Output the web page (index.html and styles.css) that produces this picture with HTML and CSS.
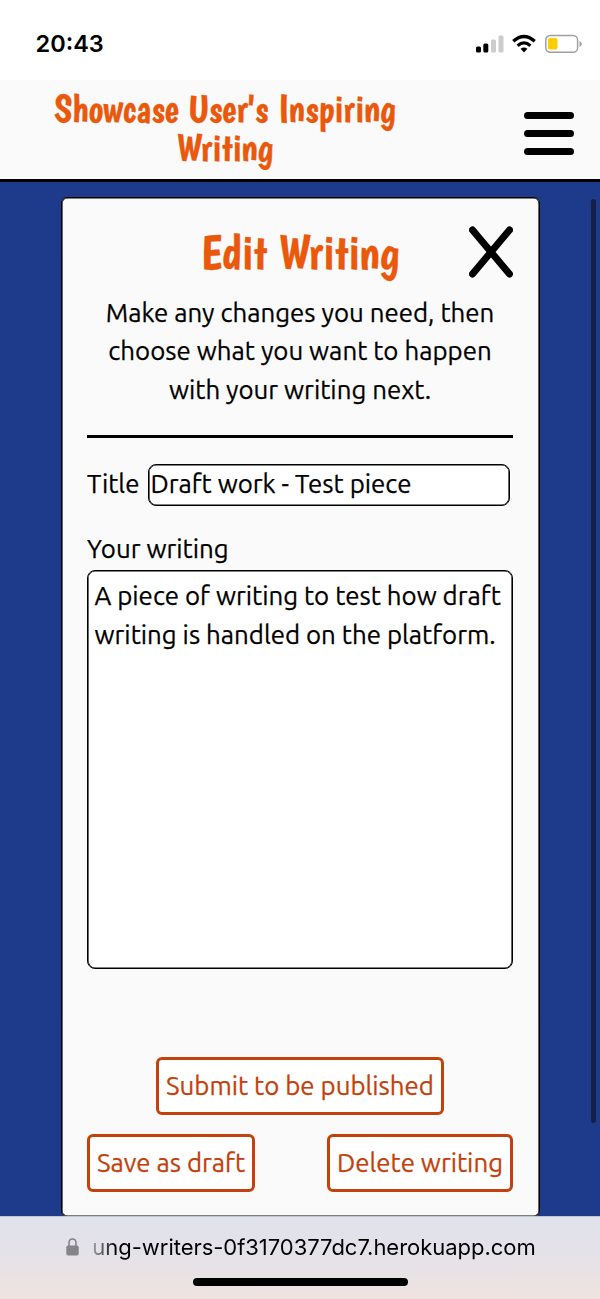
FILE: index.html
```html
<!DOCTYPE html>
<html lang="en">
<head>
<meta charset="utf-8">
<title>Edit Writing</title>
<link rel="stylesheet" href="styles.css">
</head>
<body>
<div class="phone">
  <div class="status">
    <span class="clock">20:43</span>
    <svg class="status-icons" width="108" height="24" viewBox="0 0 108 24">
      <rect x="1" y="14.5" width="5" height="6" rx="1.5"/>
      <rect x="8.300" y="11.500" width="5" height="9" rx="1.500"/>
      <g fill="#ccc"><rect x="16" y="7.500" width="5" height="13" rx="1.500"/><rect x="23.500" y="3.500" width="5" height="17" rx="1.500"/></g>
      <g fill="none" stroke="#000">
        <path d="M38.300 9.300Q49 -.2 59.700 9.300" stroke-width="3.400"/>
        <path d="M42.600 13.700Q49 8 55.400 13.700" stroke-width="3.300"/>
      </g>
      <path d="M45.600 16.800Q49 14.200 52.400 16.800L49 20.400Z"/>
      <rect x="70.800" y="3.500" width="31.800" height="16.800" rx="4.500" fill="none" stroke="#a0a0a0" stroke-width="1.500"/>
      <rect x="73" y="6" width="9.500" height="11.500" rx="2" fill="#ffcc00"/>
      <path d="M104.500 9V15Q106.800 14 106.800 12T104.500 9Z" fill="#a0a0a0"/>
    </svg>
  </div>
  <header class="header">
    <h1 class="brand">Showcase User's Inspiring<br>Writing</h1>
    <div class="menu"><i></i><i></i><i></i></div>
  </header>
  <main class="page">
    <section class="card">
      <div class="card-head">
        <h2 class="card-title">Edit Writing</h2>
        <svg class="close" width="44" height="52" viewBox="0 0 44 52"><path d="M3.500 4L40.500 48M40.500 4L3.500 48" stroke="#000" stroke-width="7" stroke-linecap="round"/></svg>
      </div>
      <p class="intro">Make any changes you need, then<br>choose what you want to happen<br>with your writing next.</p>
      <div class="title-row"><span class="label">Title</span><div class="field">Draft work - Test piece</div></div>
      <div class="label writing-label">Your writing</div>
      <div class="area">A piece of writing to test how draft<br>writing is handled on the platform.</div>
      <div class="actions">
        <div class="btn submit">Submit to be published</div>
        <div class="btn save">Save as draft</div>
        <div class="btn delete">Delete writing</div>
      </div>
    </section>
    <div class="scrollbar"></div>
  </main>
  <footer class="browser">
    <div class="address">
      <svg class="lock" width="13" height="18" viewBox="0 0 13 18"><path d="M3 8V5Q3 1 6.500 1T10 5V8" fill="none" stroke="#858489" stroke-width="1.600"/><rect x=".3" y="7.500" width="12.400" height="10" rx="1.800" fill="#858489"/></svg>
      <span class="url">ung-writers-0f3170377dc7.herokuapp.com</span>
    </div>
    <div class="home"></div>
  </footer>
</div>
</body>
</html>
```
FILE: styles.css
```css
* { box-sizing: border-box; }
body { margin: 0; background: #fff; color: #000; font-family: Ubuntu, "Noto Sans", sans-serif; font-size: 25.85px; line-height: 38.5px; -webkit-text-stroke: .25px; }
.phone { width: 600px; height: 1299px; display: flex; flex-direction: column; overflow: hidden; }
.status { height: 80px; flex: none; display: flex; justify-content: space-between; align-items: center; padding: 8px 17px 0 35.500px; }
.clock { font: 600 23.500px/28px Inter, sans-serif; -webkit-text-stroke: 0; }
.header { height: 102px; flex: none; background: #fafafa; border-bottom: 3px solid #000; display: flex; justify-content: space-between; padding: 9px 26px 0 0; }
.brand { margin: 0; width: 450px; color: #ea580c; font: 400 38.500px/39px Boogaloo, "Roboto Condensed", sans-serif; text-align: center; white-space: nowrap; -webkit-text-stroke: .3px; }
.menu { width: 50px; display: flex; flex-direction: column; gap: 10.500px; padding-top: 22.500px; }
.menu i { height: 7.500px; border-radius: 4px; background: #000; }
.page { flex: 1; min-height: 0; background: #1e3a8a; display: flex; padding: 15px 4px 0 60.500px; overflow: hidden; justify-content: space-between; }
.card { width: 479.500px; height: 1020px; background: #fafafa; border: 1px solid #000; box-shadow: inset 0 0 0 .6px #000; border-radius: 6px; padding: 27px 26px 0 25.500px; }
.card-head { position: relative; height: 60px; }
.card-title { margin: 0; color: #ea580c; text-align: center; font: 400 48px/56px Boogaloo, "Roboto Condensed", sans-serif; -webkit-text-stroke: .3px; }
.close { position: absolute; right: 0; top: 1px; }
.intro { margin: 8px 0 0; text-align: center; height: 145px; padding-top: .5px; border-bottom: 3px solid #000; }
.title-row { display: flex; align-items: center; margin-top: 25.500px; height: 42px; gap: 9px; padding-right: 3px; }
.field { flex: 1; height: 42px; background: #fff; border: 1px solid #000; box-shadow: inset 0 0 0 .6px #000; border-radius: 8px; padding-left: 1px; line-height: 38px; white-space: nowrap; }
.writing-label { margin-top: 24px; }
.area { height: 399px; background: #fff; border: 1px solid #000; box-shadow: inset 0 0 0 .6px #000; border-radius: 8px; padding: 6px 0 0 6.500px; white-space: nowrap; margin-top: 2px; }
.actions { display: grid; grid-template-columns: auto auto; justify-content: space-between; row-gap: 19px; margin-top: 88px; }
.btn { height: 58px; background: #fff; border: 3px solid #c2410c; border-radius: 6px; color: #c2410c; line-height: 51px; padding: 0 6px; white-space: nowrap; text-align: center; }
.submit { grid-column: 1 / 3; justify-self: center; width: 288px; }
.save { width: 168px; }
.delete { width: 186px; }
.scrollbar { width: 5px; height: 924px; margin-top: 2px; border-radius: 3px; background: #131f49; }
.browser { height: 83px; flex: none; border-top: 1px solid #c3c5d2; background: linear-gradient(#e0e2ed, #e5e2e8 50%, #efe3e0); display: flex; flex-direction: column; align-items: center; }
.address { display: flex; align-items: center; gap: 13px; height: 60px; padding-left: 2px; }
.url { font: 22px/28px Inter, sans-serif; letter-spacing: -.03px; -webkit-text-stroke: 0; background: linear-gradient(90deg, #a3a3ab, #000 24px); background-clip: text; -webkit-background-clip: text; color: transparent; }
.home { width: 215px; height: 8px; border-radius: 4px; background: #000; margin-top: 1px; }
```
